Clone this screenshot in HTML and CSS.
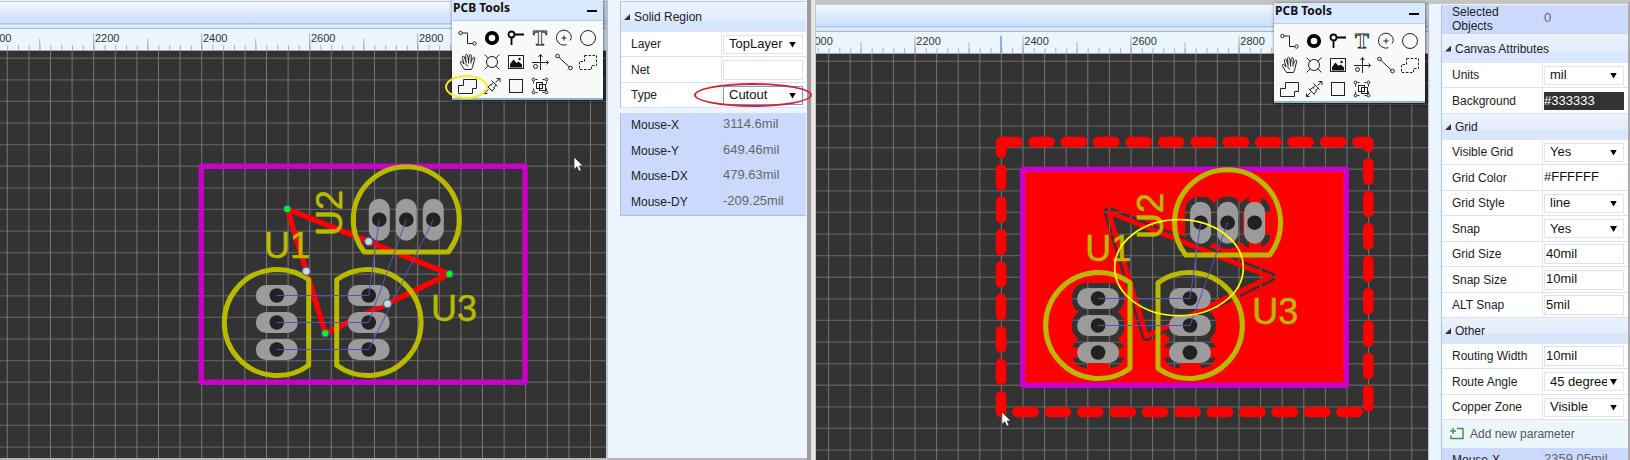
FILE: index.html
```html
<!DOCTYPE html>
<html lang="en">
<head>
<meta charset="utf-8">
<title>PCB editor: solid region cutout</title>
<link rel="stylesheet" href="styles.css">
</head>
<body>
<svg class="defs" width="0" height="0" aria-hidden="true">
  <defs>
    <symbol id="i-track" viewBox="0 0 24 24"><circle cx="4.500" cy="7" r="1.700"/><circle cx="18.500" cy="17.500" r="1.700"/><path d="M6.200 7H11.500V17.500H16.800"/></symbol>
    <symbol id="i-pad" viewBox="0 0 24 24"><circle cx="12" cy="12" r="5.200" stroke-width="3.800"/></symbol>
    <symbol id="i-via" viewBox="0 0 24 24" stroke-width="1.800"><circle cx="7.500" cy="8.500" r="3"/><path d="M10.500 8.500H20M7.500 11.500V19"/></symbol>
    <symbol id="i-text" viewBox="0 0 24 24"><text x="12" y="19" class="icon-letter">T</text></symbol>
    <symbol id="i-arc" viewBox="0 0 24 24"><path d="M14.500 18.700A7.500 7.500 0 1 1 19.400 11.500M19.400 11.500L18 14.500"/><path d="M12 9.500v5M9.500 12h5"/></symbol>
    <symbol id="i-circle" viewBox="0 0 24 24"><circle cx="12" cy="12" r="7.500"/></symbol>
    <symbol id="i-hand" viewBox="0 0 24 24"><path d="M8.500 19.500C7 17 5 14.500 4.300 12.500C4.200 11.200 5.700 11 6.500 12L8 14L6.300 7.500C6 6 7.700 5.500 8.300 7L10 11.500L9.500 5.500C9.500 3.900 11.400 3.900 11.700 5.500L12.500 11L13.300 5.500C13.700 4 15.500 4.400 15.300 6L15 11.500L17 7.800C17.800 6.700 19.200 7.300 18.700 8.700L17.500 13C17 16 16.500 17.500 15.500 19.500Z"/><path d="M9.500 14.500L12 16M10 11.500v2M12.500 11v2.500M15 11.500v2"/></symbol>
    <symbol id="i-hole" viewBox="0 0 24 24"><circle cx="12" cy="12" r="5.500"/><path d="M4.500 4.500L8.500 8.500M19.500 4.500L15.500 8.500M4.500 19.500L8.500 15.500M19.500 19.500L15.500 15.500"/></symbol>
    <symbol id="i-image" viewBox="0 0 24 24"><rect x="4.500" y="5.500" width="15" height="13"/><path class="solid" d="M6 17.500V14L9.500 9.500L12.500 13L14.500 11.500L18 14.500V17.500Z"/><circle class="solid" cx="15.500" cy="9" r="1.200"/></symbol>
    <symbol id="i-origin" viewBox="0 0 24 24"><path d="M12.500 20V4.500M10.500 7L12.500 4.500L14.500 7M4 12.500H20.500M18.500 10.500L20.500 12.500L18.500 14.500"/><circle cx="7.500" cy="16.500" r="2"/></symbol>
    <symbol id="i-line" viewBox="0 0 24 24"><circle cx="5.500" cy="6" r="1.800"/><circle cx="18.500" cy="18" r="1.800"/><path d="M7 7.400L17 16.700"/></symbol>
    <symbol id="i-copper" viewBox="0 0 24 24"><path stroke-dasharray="2.500 1.500" d="M8.500 5.500H20.500V15.500H15.500V19.500H3.500V11.500H8.500Z"/></symbol>
    <symbol id="i-region" viewBox="0 0 24 24"><path d="M7.500 5.500H20.500V14.500H16.500V19.500H2.500V11.500H7.500Z"/></symbol>
    <symbol id="i-measure" viewBox="0 0 24 24"><path d="M4.500 19.500L8.500 15.500M15.500 8.500L20 4.500M16.500 4.500H20V8M4.500 16.500V19.500H7.500M6.500 11.500L12.500 17.500M8 13L10.500 10.500L11 11.500L13 8.500M12 17L14.500 14L13.500 13.500L16.500 11M11.500 6.500L17.500 12.500"/></symbol>
    <symbol id="i-rect" viewBox="0 0 24 24"><rect x="5.500" y="5.500" width="13" height="13"/></symbol>
    <symbol id="i-group" viewBox="0 0 24 24"><rect x="8.500" y="8.500" width="6" height="6"/><rect x="11.500" y="10.500" width="6" height="6"/><path d="M7.500 5.500H16.500M5.500 7.500V16.500M7.500 18.500H16.500M18.500 7.500V16.500" stroke-dasharray="2 5"/><circle cx="5.500" cy="5.500" r="1.400"/><circle cx="18.500" cy="5.500" r="1.400"/><circle cx="5.500" cy="18.500" r="1.400"/><circle cx="18.500" cy="18.500" r="1.400"/></symbol>

    <!-- ruler: minor ticks every 20 mil, medium every 100, major every 200 -->
    <g id="ruler">
      <path class="tick" d="M-57.600 18.500H2000" stroke-width="5" stroke-dasharray="1 9.800"/>
      <path class="tick" d="M-68.800 15.500H2000" stroke-width="11" stroke-dasharray="1 53"/>
      <path class="tick" d="M-122.800 12.500H2000" stroke-width="17" stroke-dasharray="1 107"/>
      <g class="ruler-label">
        <text x="-13" y="13">2000</text><text x="95" y="13">2200</text><text x="203" y="13">2400</text><text x="311" y="13">2600</text><text x="419" y="13">2800</text>
      </g>
    </g>
    <g id="grid">
      <path stroke="#5c5c5c" stroke-width="4000" stroke-dasharray="1.300 20.300" d="M0 14.400V1200"/>
      <path stroke="#757575" stroke-width="2400" stroke-dasharray="1 20.600" d="M-14.800 0H2600"/>
    </g>
    <path id="cutout" d="M287.300 209L449.300 274L325.300 333.300Z"/>
    <g id="pads">
      <g class="pad">
        <rect x="255.800" y="285" width="42" height="21" rx="10.500"/><rect x="255.800" y="312" width="42" height="21" rx="10.500"/><rect x="255.800" y="339" width="42" height="21" rx="10.500"/>
        <rect x="347.700" y="285" width="42" height="21" rx="10.500"/><rect x="347.700" y="312" width="42" height="21" rx="10.500"/><rect x="347.700" y="339" width="42" height="21" rx="10.500"/>
        <rect x="368.800" y="198.700" width="21" height="42" rx="10.500"/><rect x="395.800" y="198.700" width="21" height="42" rx="10.500"/><rect x="422.800" y="198.700" width="21" height="42" rx="10.500"/>
      </g>
      <g class="drill">
        <circle cx="276.800" cy="295.500" r="7.300"/><circle cx="276.800" cy="322.500" r="7.300"/><circle cx="276.800" cy="349.500" r="7.300"/>
        <circle cx="368.700" cy="295.500" r="7.300"/><circle cx="368.700" cy="322.500" r="7.300"/><circle cx="368.700" cy="349.500" r="7.300"/>
        <circle cx="379.300" cy="219.700" r="7.300"/><circle cx="406.300" cy="219.700" r="7.300"/><circle cx="433.300" cy="219.700" r="7.300"/>
      </g>
    </g>
    <g id="silk">
      <path d="M308.700 279.800A53 53 0 1 0 308.700 365.200Z"/>
      <path d="M336.700 279.800A53 53 0 1 1 336.700 365.200Z"/>
      <path d="M364.300 252A53 53 0 1 1 448.300 252Z"/>
    </g>
    <g id="refs">
      <text x="264" y="258">U1</text><text x="431" y="321">U3</text><text transform="translate(342 236) rotate(-90)">U2</text>
    </g>
    <rect id="outline" x="201.300" y="166.300" width="323.700" height="216"/>
    <path id="cursor" d="M0 0V12.500L3 9.700L5 14.300L7.300 13.300L5.300 8.900H9.200Z"/>
    <mask id="pour" maskUnits="userSpaceOnUse" x="190" y="150" width="350" height="250">
      <rect x="190" y="150" width="350" height="250" fill="#fff"/>
      <g fill="#000">
        <rect x="250.800" y="280" width="52" height="31" rx="14"/><rect x="250.800" y="307" width="52" height="31" rx="14"/><rect x="250.800" y="334" width="52" height="31" rx="14"/>
        <rect x="342.700" y="280" width="52" height="31" rx="14"/><rect x="342.700" y="307" width="52" height="31" rx="14"/><rect x="342.700" y="334" width="52" height="31" rx="14"/>
        <rect x="363.800" y="193.700" width="31" height="52" rx="14"/><rect x="390.800" y="193.700" width="31" height="52" rx="14"/><rect x="417.800" y="193.700" width="31" height="52" rx="14"/>
      </g>
      <g fill="#fff">
        <rect x="250" y="344.500" width="54" height="10"/><rect x="266.500" y="352" width="21" height="16"/>
        <rect x="342" y="344.500" width="54" height="10"/><rect x="358.500" y="352" width="21" height="16"/>
        <rect x="427.500" y="192" width="12" height="56"/><rect x="421.500" y="208.700" width="28" height="22"/>
      </g>
      <use href="#cutout" fill="#000" stroke="#000" stroke-width="10" stroke-linejoin="round"/>
    </mask>
  </defs>
</svg>

<main class="compare">
  <section class="editor">
    <div class="toolbar"></div>
    <svg class="ruler"><use href="#ruler"/></svg>
    <svg class="board">
      <g transform="translate(0 -51)">
        <use href="#grid"/>
        <use href="#outline" class="outline"/>
        <use href="#cutout" class="copper-line"/>
        <use href="#silk" class="silk"/>
        <use href="#refs" class="refs"/>
        <use href="#pads"/>
        <path class="rats" d="M276.800 295.500H368.700L379.300 219.700M276.800 322.500H368.700L406.300 219.700M276.800 349.500H368.700L433.300 219.700"/>
        <g class="mid"><circle cx="368.700" cy="241.500" r="4"/><circle cx="306.300" cy="271.300" r="4"/><circle cx="387.500" cy="303.700" r="4"/></g>
        <g class="vertex"><circle cx="287.300" cy="209" r="3.700"/><circle cx="449.500" cy="274" r="3.700"/><circle cx="325.300" cy="333.300" r="3.700"/></g>
        <use href="#cursor" class="cursor" x="574" y="157"/>
      </g>
    </svg>
    <div class="toolbox">
      <div class="toolbox-title"><span>PCB Tools</span><button class="collapse" aria-label="Minimise"></button></div>
      <div class="tools">
        <button aria-label="Track"><svg><use href="#i-track"/></svg></button>
        <button aria-label="Pad"><svg><use href="#i-pad"/></svg></button>
        <button aria-label="Via"><svg><use href="#i-via"/></svg></button>
        <button aria-label="Text"><svg><use href="#i-text"/></svg></button>
        <button aria-label="Arc"><svg><use href="#i-arc"/></svg></button>
        <button aria-label="Circle"><svg><use href="#i-circle"/></svg></button>
        <button aria-label="Move"><svg><use href="#i-hand"/></svg></button>
        <button aria-label="Hole"><svg><use href="#i-hole"/></svg></button>
        <button aria-label="Image"><svg><use href="#i-image"/></svg></button>
        <button aria-label="Canvas origin"><svg><use href="#i-origin"/></svg></button>
        <button aria-label="Connect pad to pad"><svg><use href="#i-line"/></svg></button>
        <button aria-label="Copper area"><svg><use href="#i-copper"/></svg></button>
        <button aria-label="Solid region"><svg><use href="#i-region"/></svg></button>
        <button aria-label="Measure"><svg><use href="#i-measure"/></svg></button>
        <button aria-label="Rectangle"><svg><use href="#i-rect"/></svg></button>
        <button aria-label="Group"><svg><use href="#i-group"/></svg></button>
      </div>
      <div class="mark mark-tool"></div>
    </div>
  </section>

  <aside class="side">
    <h2 class="head head-tall">Solid Region</h2>
    <table class="props">
      <tr><th><label for="layer">Layer</label></th><td><div class="pick"><select id="layer"><option>TopLayer</option></select></div></td></tr>
      <tr><th><label for="net">Net</label></th><td><input id="net" type="text"></td></tr>
      <tr><th><label for="type">Type</label></th><td><div class="pick pick-focus"><select id="type"><option>Cutout</option></select></div><div class="mark mark-type"></div></td></tr>
    </table>
    <table class="props readout readout-gap">
      <tr><th>Mouse-X</th><td>3114.6mil</td></tr>
      <tr><th>Mouse-Y</th><td>649.46mil</td></tr>
      <tr><th>Mouse-DX</th><td>479.63mil</td></tr>
      <tr><th>Mouse-DY</th><td>-209.25mil</td></tr>
    </table>
  </aside>

  <div class="divider"></div>

  <section class="editor editor-after">
    <div class="toolbar"></div>
    <svg class="ruler"><g transform="translate(5.300 0)"><use href="#ruler"/><path stroke="#5f9de0" stroke-width="1.500" d="M179.700 4V21"/></g></svg>
    <svg class="board">
      <g transform="translate(5.300 -51)">
        <use href="#grid"/>
        <path class="copper-edge" d="M179.700 139H547V409H179.700V139"/>
        <rect x="201.300" y="166.300" width="323.700" height="216" fill="#f00" mask="url(#pour)"/>
        <use href="#outline" class="outline"/>
        <use href="#cutout" class="copper-line copper-thin"/>
        <use href="#silk" class="silk"/>
        <use href="#refs" class="refs"/>
        <use href="#pads"/>
        <path class="rats" d="M276.800 295.500H368.700L379.300 219.700M276.800 322.500H368.700L406.300 219.700"/>
        <ellipse class="note" cx="357.700" cy="264.700" rx="64.300" ry="48"/>
        <use href="#cursor" class="cursor" x="180.500" y="409"/>
      </g>
    </svg>
    <div class="toolbox">
      <div class="toolbox-title"><span>PCB Tools</span><button class="collapse" aria-label="Minimise"></button></div>
      <div class="tools">
        <button aria-label="Track"><svg><use href="#i-track"/></svg></button>
        <button aria-label="Pad"><svg><use href="#i-pad"/></svg></button>
        <button aria-label="Via"><svg><use href="#i-via"/></svg></button>
        <button aria-label="Text"><svg><use href="#i-text"/></svg></button>
        <button aria-label="Arc"><svg><use href="#i-arc"/></svg></button>
        <button aria-label="Circle"><svg><use href="#i-circle"/></svg></button>
        <button aria-label="Move"><svg><use href="#i-hand"/></svg></button>
        <button aria-label="Hole"><svg><use href="#i-hole"/></svg></button>
        <button aria-label="Image"><svg><use href="#i-image"/></svg></button>
        <button aria-label="Canvas origin"><svg><use href="#i-origin"/></svg></button>
        <button aria-label="Connect pad to pad"><svg><use href="#i-line"/></svg></button>
        <button aria-label="Copper area"><svg><use href="#i-copper"/></svg></button>
        <button aria-label="Solid region"><svg><use href="#i-region"/></svg></button>
        <button aria-label="Measure"><svg><use href="#i-measure"/></svg></button>
        <button aria-label="Rectangle"><svg><use href="#i-rect"/></svg></button>
        <button aria-label="Group"><svg><use href="#i-group"/></svg></button>
      </div>
    </div>
  </section>

  <aside class="side side-after">
    <table class="props readout"><tr class="two-line"><th>Selected Objects</th><td>0</td></tr></table>
    <h2 class="head head-tall">Canvas Attributes</h2>
    <table class="props">
      <tr><th><label for="units">Units</label></th><td><div class="pick"><select id="units"><option>mil</option></select></div></td></tr>
      <tr><th><label for="bg">Background</label></th><td><input id="bg" class="swatch-dark" type="text" value="#333333"></td></tr>
    </table>
    <h2 class="head">Grid</h2>
    <table class="props">
      <tr><th><label for="vg">Visible Grid</label></th><td><div class="pick"><select id="vg"><option>Yes</option></select></div></td></tr>
      <tr><th><label for="gc">Grid Color</label></th><td><input id="gc" class="swatch-light" type="text" value="#FFFFFF"></td></tr>
      <tr><th><label for="gs">Grid Style</label></th><td><div class="pick"><select id="gs"><option>line</option></select></div></td></tr>
      <tr><th><label for="snap">Snap</label></th><td><div class="pick"><select id="snap"><option>Yes</option></select></div></td></tr>
      <tr><th><label for="gsize">Grid Size</label></th><td><input id="gsize" type="text" value="40mil"></td></tr>
      <tr><th><label for="ssize">Snap Size</label></th><td><input id="ssize" type="text" value="10mil"></td></tr>
      <tr><th><label for="alt">ALT Snap</label></th><td><input id="alt" type="text" value="5mil"></td></tr>
    </table>
    <h2 class="head">Other</h2>
    <table class="props">
      <tr><th><label for="rw">Routing Width</label></th><td><input id="rw" type="text" value="10mil"></td></tr>
      <tr><th><label for="ra">Route Angle</label></th><td><div class="pick"><select id="ra"><option>45 degree</option></select></div></td></tr>
      <tr><th><label for="cz">Copper Zone</label></th><td><div class="pick"><select id="cz"><option>Visible</option></select></div></td></tr>
    </table>
    <button class="add"><svg width="16" height="14" viewBox="0 0 16 14"><path d="M8 1.500H14V11.500H2V8.500M4 1V7M1 4H7" fill="none" stroke="#3c9a4c" stroke-width="1.500"/></svg>Add new parameter</button>
    <table class="props readout"><tr><th>Mouse-X</th><td>2359.05mil</td></tr></table>
  </aside>
</main>
</body>
</html>
```
FILE: styles.css
```css
* { box-sizing: border-box; }
body {
  margin: 0;
  height: 100vh;
  overflow: hidden;
  background: #fff;
  color: #222;
  font: 12px/14px "Liberation Sans", Arial, sans-serif;
}
button, input, select { font: inherit; color: inherit; margin: 0; padding: 0; border: 0; background: none; border-radius: 0; }
.defs { position: absolute; }

.compare {
  display: grid;
  grid-template-columns: minmax(0, 606fr) 201px 9px minmax(0, 612fr) 202px;
  grid-template-rows: minmax(0, 1fr);
  height: 100%;
}

.editor {
  position: relative;
  display: flex;
  flex-direction: column;
  min-width: 0;
  border-top: 1px solid #eef3f8;
  border-bottom: 2px solid #b5b5b5;
}
.editor-after { border-top: 4px solid #c4c4c2; border-bottom: 0; }
.toolbar {
  flex: none;
  height: 28px;
  border-top: 1px solid #b9cbdd;
  border-bottom: 1px solid #9fb6d8;
  background: linear-gradient(#f4f7fc 0, #d9e8fd 12px, #cbe1ff 21px, #8fb0d8 22px, #fff 23px, #d3e5fe 24px, #dcebff 100%);
}
.ruler { flex: none; display: block; width: 100%; height: 22px; background: #ebf5fd; border-bottom: 1px solid #a5a5a5; }
.tick { stroke: #b0b4b8; fill: none; }
.ruler-label { font-size: 11px; fill: #333; }
.board { flex: 1; display: block; width: 100%; min-height: 0; background: #333; fill: none; }

.outline { stroke: #c800c8; stroke-width: 5.5px; stroke-linejoin: round; }
.copper-line { stroke: #f00; stroke-width: 5.5px; stroke-linejoin: round; }
.copper-thin { stroke-width: 5px; }
.copper-edge { stroke: #f00; stroke-width: 10.5px; stroke-linecap: round; stroke-linejoin: round; stroke-dasharray: 16.2 16.2; }
.silk { stroke: #b9b900; stroke-width: 5px; stroke-linejoin: round; }
.refs { fill: #b9b900; stroke: #b9b900; stroke-width: 0.5px; font-size: 36px; }
.pad { fill: #9b9b9b; stroke: none; }
.drill { fill: #222; stroke: none; }
.rats { stroke: #5252c4; stroke-width: 1px; }
.mid { fill: #b9e6c0; stroke: #6a50c0; stroke-width: 1.3px; }
.vertex { fill: #0f0; stroke: #4a4ab4; stroke-width: 1.2px; }
.note { stroke: #ff0; stroke-width: 1.7px; }
.cursor { fill: #fff; stroke: #222; stroke-width: 0.7px; }

.toolbox {
  position: absolute;
  top: -1px;
  right: 3px;
  width: 151px;
  background: #f8f9f9;
  border-bottom: 2px solid #8db4cc;
  box-shadow: 1px 1px 3px 1px #0007;
}
.toolbox-title {
  display: flex;
  justify-content: space-between;
  height: 21px;
  padding: 1px 6px 0 1px;
  background: #d8e8fe;
  border-bottom: 1px solid #b4d0e4;
  color: #111;
  font: bold 12px/14px "Noto Sans", "Open Sans", sans-serif;
}
.collapse { align-self: center; width: 10px; height: 2px; background: #000; }
.tools { display: grid; grid-template-columns: repeat(6, 24px); padding: 5px 3px 0 4px; }
.tools button { width: 24px; height: 24px; }
.tools svg { display: block; width: 24px; height: 24px; fill: none; stroke: #222; stroke-width: 1px; }
#i-pad, #i-via { stroke: #000; }
#i-via { stroke-width: 1.8px; }
.icon-letter { font: bold 21px "Liberation Serif", serif; text-anchor: middle; fill: #f8f9f9; stroke-width: 0.8px; }
.solid { fill: #111; stroke: none; }

.mark { position: absolute; border-radius: 50%; pointer-events: none; }
.mark-tool { left: -7px; bottom: -1px; width: 43px; height: 24px; border: 2px solid #f7ee1c; }
.mark-type { right: -6px; top: 0; width: 118px; height: 24px; border: 2px solid #dc1f2a; }

.side { padding: 1px 1px 0 12px; background: #ecf5fd; border-left: 2px solid #b8c8dc; border-bottom: 2px solid #b5b5b5; min-width: 0; }
.side-after { border-left-width: 1px; border-top: 4px solid #c4c4c2; border-right: 2px solid #aaa; border-bottom: 0; padding-right: 0; }
.divider { background: linear-gradient(90deg, #9c9a9a 0 4px, #ddd 4px, #eee 7px, #bbb 9px); }

.head {
  display: flex;
  align-items: center;
  gap: 4px;
  height: 26px;
  margin: 0;
  padding-left: 3px;
  border: solid #a8c4e4;
  border-width: 0 0 0 1px;
  background: linear-gradient(#edf3fd 0, #e3ecfc 60%, #d7e5fc 65%, #dae7fb 100%);
  font-size: 12px;
  font-weight: normal;
}
.head::before { content: ""; width: 6px; height: 6px; background: #333; clip-path: polygon(100% 0, 100% 100%, 0 100%); }
.head-tall { height: 29px; }
.side:not(.side-after) .head { height: 31px; border-top: 1px solid #b4cfee; }

.props { width: 100%; table-layout: fixed; border-spacing: 0; border-left: 1px solid #a8c4e4; background: #fff; }
.props th, .props td { height: 25px; padding: 0; border-bottom: 1px solid #d5e3fa; text-align: left; font-weight: normal; }
.props tr:nth-child(even) > * { height: 26px; }
.props th { width: 101px; padding-left: 10px; border-right: 1px solid #dfe9fb; }
.props td { position: relative; padding-left: 1px; font-size: 13px; }
.props input { display: block; width: 80px; height: 20px; padding: 0 1px 2px; border: 1px solid #dedefa; color: #111; }
.props .swatch-dark { background: #333; color: #fff; border: 0; height: 18px; padding: 0; }
.props .swatch-light { border: 0; padding-left: 0; }
.pick { position: relative; width: 80px; height: 19px; border: 1px solid #e4e4e4; color: #111; }
.pick select { display: block; appearance: none; width: 57px; height: 17px; margin-left: 5px; overflow: hidden; text-overflow: clip; outline: 0; }
.pick::after { content: ""; position: absolute; right: 6px; top: 6px; width: 7px; height: 6px; background: #000; clip-path: polygon(0 0, 100% 0, 50% 100%); }
.pick-focus { border: 1px solid #6a9ef0; }
.readout { background: #cad9fc; }
.readout th, .readout td { border-color: #c4d6fa; }
.readout td { color: #666; padding-bottom: 2px; }
.readout-gap { margin-top: 5px; border-bottom: 1px solid #a8c4e4; }
.props .two-line > * { height: 29px; }
.two-line th { padding-right: 40px; }
.add {
  display: flex;
  align-items: center;
  gap: 5px;
  width: 100%;
  height: 28px;
  padding-left: 7px;
  border-left: 1px solid #a8c4e4;
  background: #ebf6fd;
  color: #555;
}
```
